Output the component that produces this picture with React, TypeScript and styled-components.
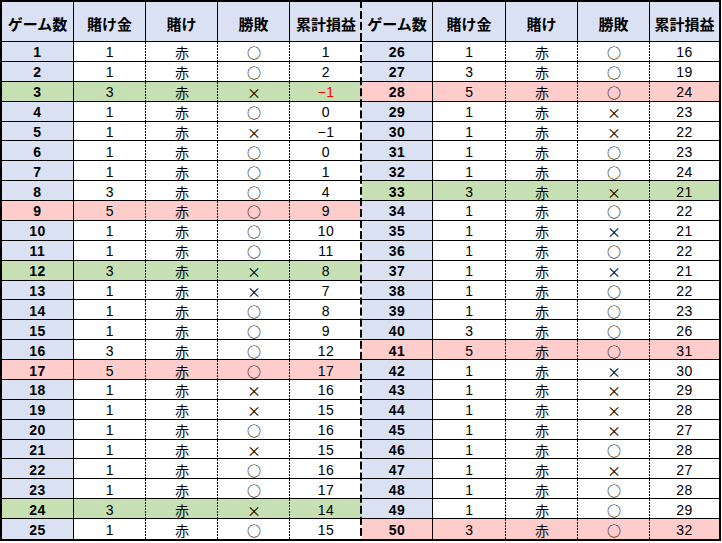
import React from "react";
import styled, { createGlobalStyle } from "styled-components";

const GlobalStyle = createGlobalStyle`
  html, body { margin: 0; padding: 0; background: #ffffff; }
  body { font-family: "Noto Sans CJK JP", "Liberation Sans", sans-serif; }
`;

type Line = "solid" | "dot" | "divider" | "none";
type Tone = "none" | "win" | "loss";

const HEAD_BG = "#d9e1f2";
const TONE_BG: Record<Tone, string> = {
  none: "#ffffff",
  win: "#ffcccc",
  loss: "#c6e0b4",
};

const Sheet = styled.div`
  display: grid;
  grid-template-columns: 72px 72px 72px 72px 72px 71px 73px 72px 72px 69px;
  grid-template-rows: 40px repeat(25, 1fr);
  width: 721px;
  height: 541px;
  box-sizing: border-box;
  border: 2px solid #000;
`;

const Cell = styled.div<{ $bg: string; $line: Line; $last?: boolean }>`
  box-sizing: border-box;
  display: flex;
  align-items: center;
  justify-content: center;
  padding-top: 2px;
  white-space: nowrap;
  line-height: 1;
  color: #000;
  min-height: 0;
  background-color: ${(p) => p.$bg};
  border-bottom: ${(p) => (p.$last ? "none" : "1px solid #000")};
  border-right: ${(p) => (p.$line === "solid" ? "1px solid #000" : "none")};
  background-image: ${(p) =>
    p.$line === "dot"
      ? "linear-gradient(to bottom, #000 2px, transparent 2px)"
      : p.$line === "divider"
      ? "linear-gradient(to bottom, #000 8px, transparent 8px)"
      : "none"};
  background-size: ${(p) => (p.$line === "divider" ? "2px 11px" : "1px 3px")};
  background-position: ${(p) => (p.$line === "divider" ? "360px 0" : "right top")};
  background-attachment: ${(p) => (p.$line === "divider" ? "fixed" : "scroll")};
  background-repeat: repeat-y;
`;

const HeadCell = styled(Cell)`
  font-family: "Noto Sans CJK JP", sans-serif;
  font-weight: 700;
  font-size: 15px;
  padding-top: 4px;
`;

const GameCell = styled(Cell)`
  font-family: "Liberation Sans", Arial, sans-serif;
  font-weight: 700;
  font-size: 14px;
  letter-spacing: 0.5px;
`;

const NumCell = styled(Cell)<{ $red?: boolean }>`
  font-family: "Liberation Sans", Arial, sans-serif;
  font-size: 14px;
  letter-spacing: 0.5px;
  color: ${(p) => (p.$red ? "#ff0000" : "#000")};
`;

const KanaCell = styled(Cell)`
  font-family: "Noto Sans CJK JP", sans-serif;
  font-size: 14px;
`;

type Row = { n: number; bet: number; win: boolean; total: number; tone: Tone; red?: boolean };

const raw: [number, number, string, number, Tone, boolean?][] = [
  [1, 1, "o", 1, "none"],
  [2, 1, "o", 2, "none"],
  [3, 3, "x", -1, "loss", true],
  [4, 1, "o", 0, "none"],
  [5, 1, "x", -1, "none"],
  [6, 1, "o", 0, "none"],
  [7, 1, "o", 1, "none"],
  [8, 3, "o", 4, "none"],
  [9, 5, "o", 9, "win"],
  [10, 1, "o", 10, "none"],
  [11, 1, "o", 11, "none"],
  [12, 3, "x", 8, "loss"],
  [13, 1, "x", 7, "none"],
  [14, 1, "o", 8, "none"],
  [15, 1, "o", 9, "none"],
  [16, 3, "o", 12, "none"],
  [17, 5, "o", 17, "win"],
  [18, 1, "x", 16, "none"],
  [19, 1, "x", 15, "none"],
  [20, 1, "o", 16, "none"],
  [21, 1, "x", 15, "none"],
  [22, 1, "o", 16, "none"],
  [23, 1, "o", 17, "none"],
  [24, 3, "x", 14, "loss"],
  [25, 1, "o", 15, "none"],
  [26, 1, "o", 16, "none"],
  [27, 3, "o", 19, "none"],
  [28, 5, "o", 24, "win"],
  [29, 1, "x", 23, "none"],
  [30, 1, "x", 22, "none"],
  [31, 1, "o", 23, "none"],
  [32, 1, "o", 24, "none"],
  [33, 3, "x", 21, "loss"],
  [34, 1, "o", 22, "none"],
  [35, 1, "x", 21, "none"],
  [36, 1, "o", 22, "none"],
  [37, 1, "x", 21, "none"],
  [38, 1, "o", 22, "none"],
  [39, 1, "o", 23, "none"],
  [40, 3, "o", 26, "none"],
  [41, 5, "o", 31, "win"],
  [42, 1, "x", 30, "none"],
  [43, 1, "x", 29, "none"],
  [44, 1, "x", 28, "none"],
  [45, 1, "x", 27, "none"],
  [46, 1, "o", 28, "none"],
  [47, 1, "x", 27, "none"],
  [48, 1, "o", 28, "none"],
  [49, 1, "o", 29, "none"],
  [50, 3, "o", 32, "win"],
];

const rows: Row[] = raw.map(([n, bet, r, total, tone, red]) => ({
  n,
  bet,
  win: r === "o",
  total,
  tone,
  red,
}));

const headers = ["ゲーム数", "賭け金", "賭け", "勝敗", "累計損益"];

const fmt = (v: number) => (v < 0 ? `−${Math.abs(v)}` : String(v));

function Half({ row, side, last }: { row: Row; side: "left" | "right"; last: boolean }) {
  const bg = TONE_BG[row.tone];
  const gameBg = row.tone === "none" ? HEAD_BG : bg;
  return (
    <>
      <GameCell $bg={gameBg} $line="solid" $last={last}>
        {row.n}
      </GameCell>
      <NumCell $bg={bg} $line="dot" $last={last}>
        {row.bet}
      </NumCell>
      <KanaCell $bg={bg} $line="dot" $last={last}>
        赤
      </KanaCell>
      <KanaCell $bg={bg} $line="dot" $last={last}>
        {row.win ? "○" : "×"}
      </KanaCell>
      <NumCell $bg={bg} $line={side === "left" ? "divider" : "none"} $last={last} $red={row.red}>
        {fmt(row.total)}
      </NumCell>
    </>
  );
}

export default function App() {
  const left = rows.slice(0, 25);
  const right = rows.slice(25);
  return (
    <>
      <GlobalStyle />
      <Sheet>
        {[0, 1].map((half) =>
          headers.map((h, i) => (
            <HeadCell
              key={`h${half}-${i}`}
              $bg={HEAD_BG}
              $line={i < 4 ? "solid" : half === 0 ? "divider" : "none"}
            >
              {h}
            </HeadCell>
          ))
        )}
        {left.map((r, i) => (
          <React.Fragment key={r.n}>
            <Half row={r} side="left" last={i === 24} />
            <Half row={right[i]} side="right" last={i === 24} />
          </React.Fragment>
        ))}
      </Sheet>
    </>
  );
}
